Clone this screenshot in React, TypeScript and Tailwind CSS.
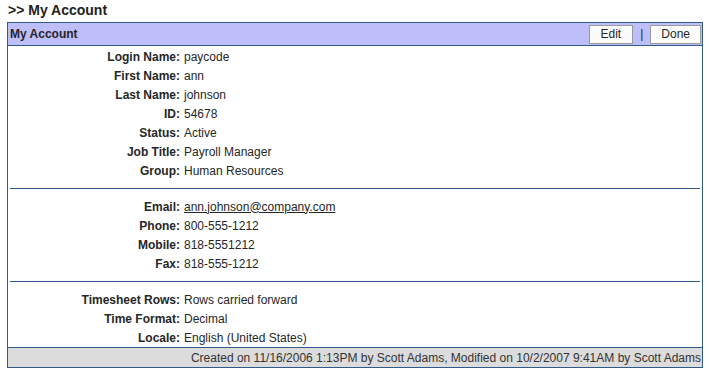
import React from "react";

type Row = { label: string; value: string; link?: boolean };

const sections: Row[][] = [
  [
    { label: "Login Name:", value: "paycode" },
    { label: "First Name:", value: "ann" },
    { label: "Last Name:", value: "johnson" },
    { label: "ID:", value: "54678" },
    { label: "Status:", value: "Active" },
    { label: "Job Title:", value: "Payroll Manager" },
    { label: "Group:", value: "Human Resources" },
  ],
  [
    { label: "Email:", value: "ann.johnson@company.com", link: true },
    { label: "Phone:", value: "800-555-1212" },
    { label: "Mobile:", value: "818-5551212" },
    { label: "Fax:", value: "818-555-1212" },
  ],
  [
    { label: "Timesheet Rows:", value: "Rows carried forward" },
    { label: "Time Format:", value: "Decimal" },
    { label: "Locale:", value: "English (United States)" },
  ],
];

function Section({ rows, pt, pb }: { rows: Row[]; pt: string; pb: string }) {
  return (
    <div className={`${pt} ${pb}`}>
      {rows.map((r) => (
        <div key={r.label} className="flex h-[19px] items-center">
          <div className="w-[172px] text-right font-bold">{r.label}</div>
          <div className="pl-[4px]">
            {r.link ? <a className="underline">{r.value}</a> : r.value}
          </div>
        </div>
      ))}
    </div>
  );
}

export default function App() {
  return (
    <div
      className="w-[710px] h-[374px] bg-white text-[12px] text-[#262626]"
      style={{ fontFamily: '"Liberation Sans", Arial, sans-serif' }}
    >
      <div className="h-[22px] pl-[8px] pt-[1px] text-[14px] font-bold leading-[18px] text-[#222]">
        &gt;&gt; My Account
      </div>
      <div className="ml-[7px] w-[696px] border border-[#2f5a8a]">
        {/* header */}
        <div className="flex h-[23px] items-center justify-between border-b border-[#2f5a8a] bg-[#bebefa] pl-[2px] pr-[1px]">
          <span className="font-bold">My Account</span>
          <div className="flex items-center">
            <button className="h-[19px] border border-[#9a9a9a] bg-[#fbfbfb] px-[11px] leading-[16px]">
              Edit
            </button>
            <span className="px-[7px]">|</span>
            <button className="h-[19px] border border-[#9a9a9a] bg-[#fbfbfb] px-[10px] leading-[16px]">
              Done
            </button>
          </div>
        </div>

        <Section rows={sections[0]} pt="pt-[1px]" pb="pb-[8px]" />
        <div className="mx-[2px] h-px bg-[#2f5a8a]" />
        <Section rows={sections[1]} pt="pt-[8px]" pb="pb-[8px]" />
        <div className="mx-[2px] h-px bg-[#2f5a8a]" />
        <Section rows={sections[2]} pt="pt-[8px]" pb="pb-0" />

        {/* footer */}
        <div className="flex h-[20px] items-center justify-end border-t border-[#2f5a8a] bg-[#dcdcdc] pr-[1px] text-[#333]">
          Created on 11/16/2006 1:13PM by Scott Adams, Modified on 10/2/2007 9:41AM by Scott Adams
        </div>
      </div>
    </div>
  );
}
